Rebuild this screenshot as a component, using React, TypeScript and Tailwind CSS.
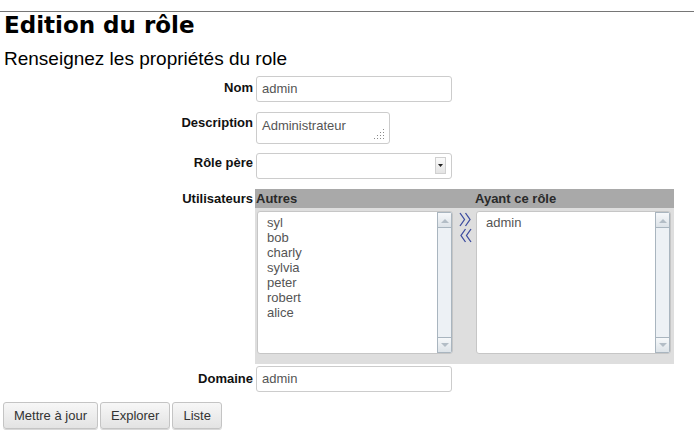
import React from "react";

const autres = ["syl", "bob", "charly", "sylvia", "peter", "robert", "alice"];
const ayant = ["admin"];

function Label({ children, pt }: { children: React.ReactNode; pt: string }) {
  return (
    <div className={`w-[253px] shrink-0 text-right font-bold text-[#111] leading-[15px] ${pt}`}>
      {children}
    </div>
  );
}

function ScrollBar() {
  return (
    <div className="flex w-[15px] shrink-0 flex-col border border-[#a9b5bf] bg-[#edf1f5]">
      <div className="flex h-[15px] items-center justify-center border-b border-[#a9b5bf] bg-gradient-to-b from-[#f6f8fa] to-[#dde3e8]">
        <svg width="8" height="5" viewBox="0 0 8 5">
          <path d="M0 5 L4 1 L8 5 Z" fill="#b3bdc6" />
        </svg>
      </div>
      <div className="flex-1" />
      <div className="flex h-[15px] items-center justify-center border-t border-[#a9b5bf] bg-gradient-to-b from-[#f6f8fa] to-[#dde3e8]">
        <svg width="8" height="5" viewBox="0 0 8 5">
          <path d="M0 0 L8 0 L4 4 Z" fill="#b3bdc6" />
        </svg>
      </div>
    </div>
  );
}

function ListBox({ items, width }: { items: string[]; width: string }) {
  return (
    <div className={`flex h-[143px] ${width} overflow-hidden rounded-[3px] border border-[#c6c6c6] bg-white`}>
      <div className="flex-1 pl-[9px] pt-[3px] leading-[15px] text-[#555]">
        {items.map((u) => (
          <div key={u}>{u}</div>
        ))}
      </div>
      <ScrollBar />
    </div>
  );
}

function Chevrons({ dir }: { dir: "right" | "left" }) {
  const d =
    dir === "right"
      ? "M1 1 L5.5 7.5 L1 14 M6.5 1 L11 7.5 L6.5 14"
      : "M6.5 1 L2 7.5 L6.5 14 M12 1 L7.5 7.5 L12 14";
  return (
    <svg width="13" height="15" viewBox="0 0 13 15">
      <path d={d} fill="none" stroke="#3c4c9f" strokeWidth="1.3" />
    </svg>
  );
}

export default function App() {
  return (
    <div className="h-[442px] w-[694px] overflow-hidden bg-white pt-[11px] font-['Liberation_Sans',Arial,sans-serif] text-[13px] text-[#222]">
      <div className="h-px bg-[#767676]" />
      <h1 className="px-[4px] font-['DejaVu_Sans',sans-serif] text-[23px] font-bold leading-[26px] text-black">
        Edition du rôle
      </h1>
      <h2 className="mt-[10px] px-[4px] text-[19px] leading-[22px] text-black">
        Renseignez les propriétés du role
      </h2>

      <div className="mt-[6px] flex flex-col">
        {/* Nom */}
        <div className="flex">
          <Label pt="pt-[4px]">Nom</Label>
          <div className="ml-[3px] flex h-[26px] w-[196px] items-center rounded-[3px] border border-[#cccccc] bg-white pl-[5px] text-[#555]">
            admin
          </div>
        </div>

        {/* Description */}
        <div className="mt-[10px] flex">
          <Label pt="pt-[3px]">Description</Label>
          <div className="relative ml-[3px] h-[32px] w-[134px] rounded-[3px] border border-[#cccccc] bg-white pl-[5px] pt-[5px] leading-[15px] text-[#555]">
            Administrateur
            <svg className="absolute bottom-[3px] right-[4px]" width="11" height="11" viewBox="0 0 11 11">
              {[0, 1, 2, 3].map((r) =>
                [0, 1, 2, 3]
                  .filter((c) => c >= 3 - r)
                  .map((c) => (
                    <rect key={`${r}-${c}`} x={c * 3} y={r * 3} width="1" height="1" fill="#8a8a8a" />
                  ))
              )}
            </svg>
          </div>
        </div>

        {/* Rôle père */}
        <div className="mt-[9px] flex">
          <Label pt="pt-[2px]">Rôle père</Label>
          <div className="relative ml-[3px] h-[26px] w-[196px] rounded-[3px] border border-[#cccccc] bg-white">
            <div className="absolute right-[5px] top-[3px] flex h-[17px] w-[11px] items-center justify-center border border-[#d0d0d0] bg-gradient-to-b from-[#fafafa] to-[#e4e4e4]">
              <svg width="5" height="3" viewBox="0 0 5 3">
                <path d="M0 0 L5 0 L2.5 3 Z" fill="#222" />
              </svg>
            </div>
          </div>
        </div>

        {/* Utilisateurs */}
        <div className="mt-[10px] flex">
          <Label pt="pt-[2px]">Utilisateurs</Label>
          <div className="ml-[2px] w-[419px] bg-[#dedede]">
            <div className="flex h-[19px] items-center bg-[#a9a9a9] font-bold text-[#2a2a2a]">
              <div className="w-[220px] pl-[1px]">Autres</div>
              <div>Ayant ce rôle</div>
            </div>
            <div className="flex pb-[10px] pt-[3px]">
              <div className="ml-[2px]">
                <ListBox items={autres} width="w-[196px]" />
              </div>
              <div className="flex w-[23px] flex-col items-center pl-[1px] pt-[1px]">
                <Chevrons dir="right" />
                <div className="mt-[1px]">
                  <Chevrons dir="left" />
                </div>
              </div>
              <ListBox items={ayant} width="w-[195px]" />
            </div>
          </div>
        </div>

        {/* Domaine */}
        <div className="mt-[2px] flex">
          <Label pt="pt-[5px]">Domaine</Label>
          <div className="ml-[3px] flex h-[26px] w-[196px] items-center rounded-[3px] border border-[#cccccc] bg-white pl-[5px] text-[#555]">
            admin
          </div>
        </div>
      </div>

      <div className="ml-[3px] mt-[10px] flex gap-[2px]">
        {["Mettre à jour", "Explorer", "Liste"].map((b) => (
          <button
            key={b}
            type="button"
            className="h-[27px] rounded-[3px] border border-[#c4c4c4] bg-gradient-to-b from-[#f7f7f7] to-[#e3e3e3] px-[10px] pt-[1px] text-[13px] text-[#333] shadow-[0_1px_0_#d8d8d8]"
          >
            {b}
          </button>
        ))}
      </div>
    </div>
  );
}
